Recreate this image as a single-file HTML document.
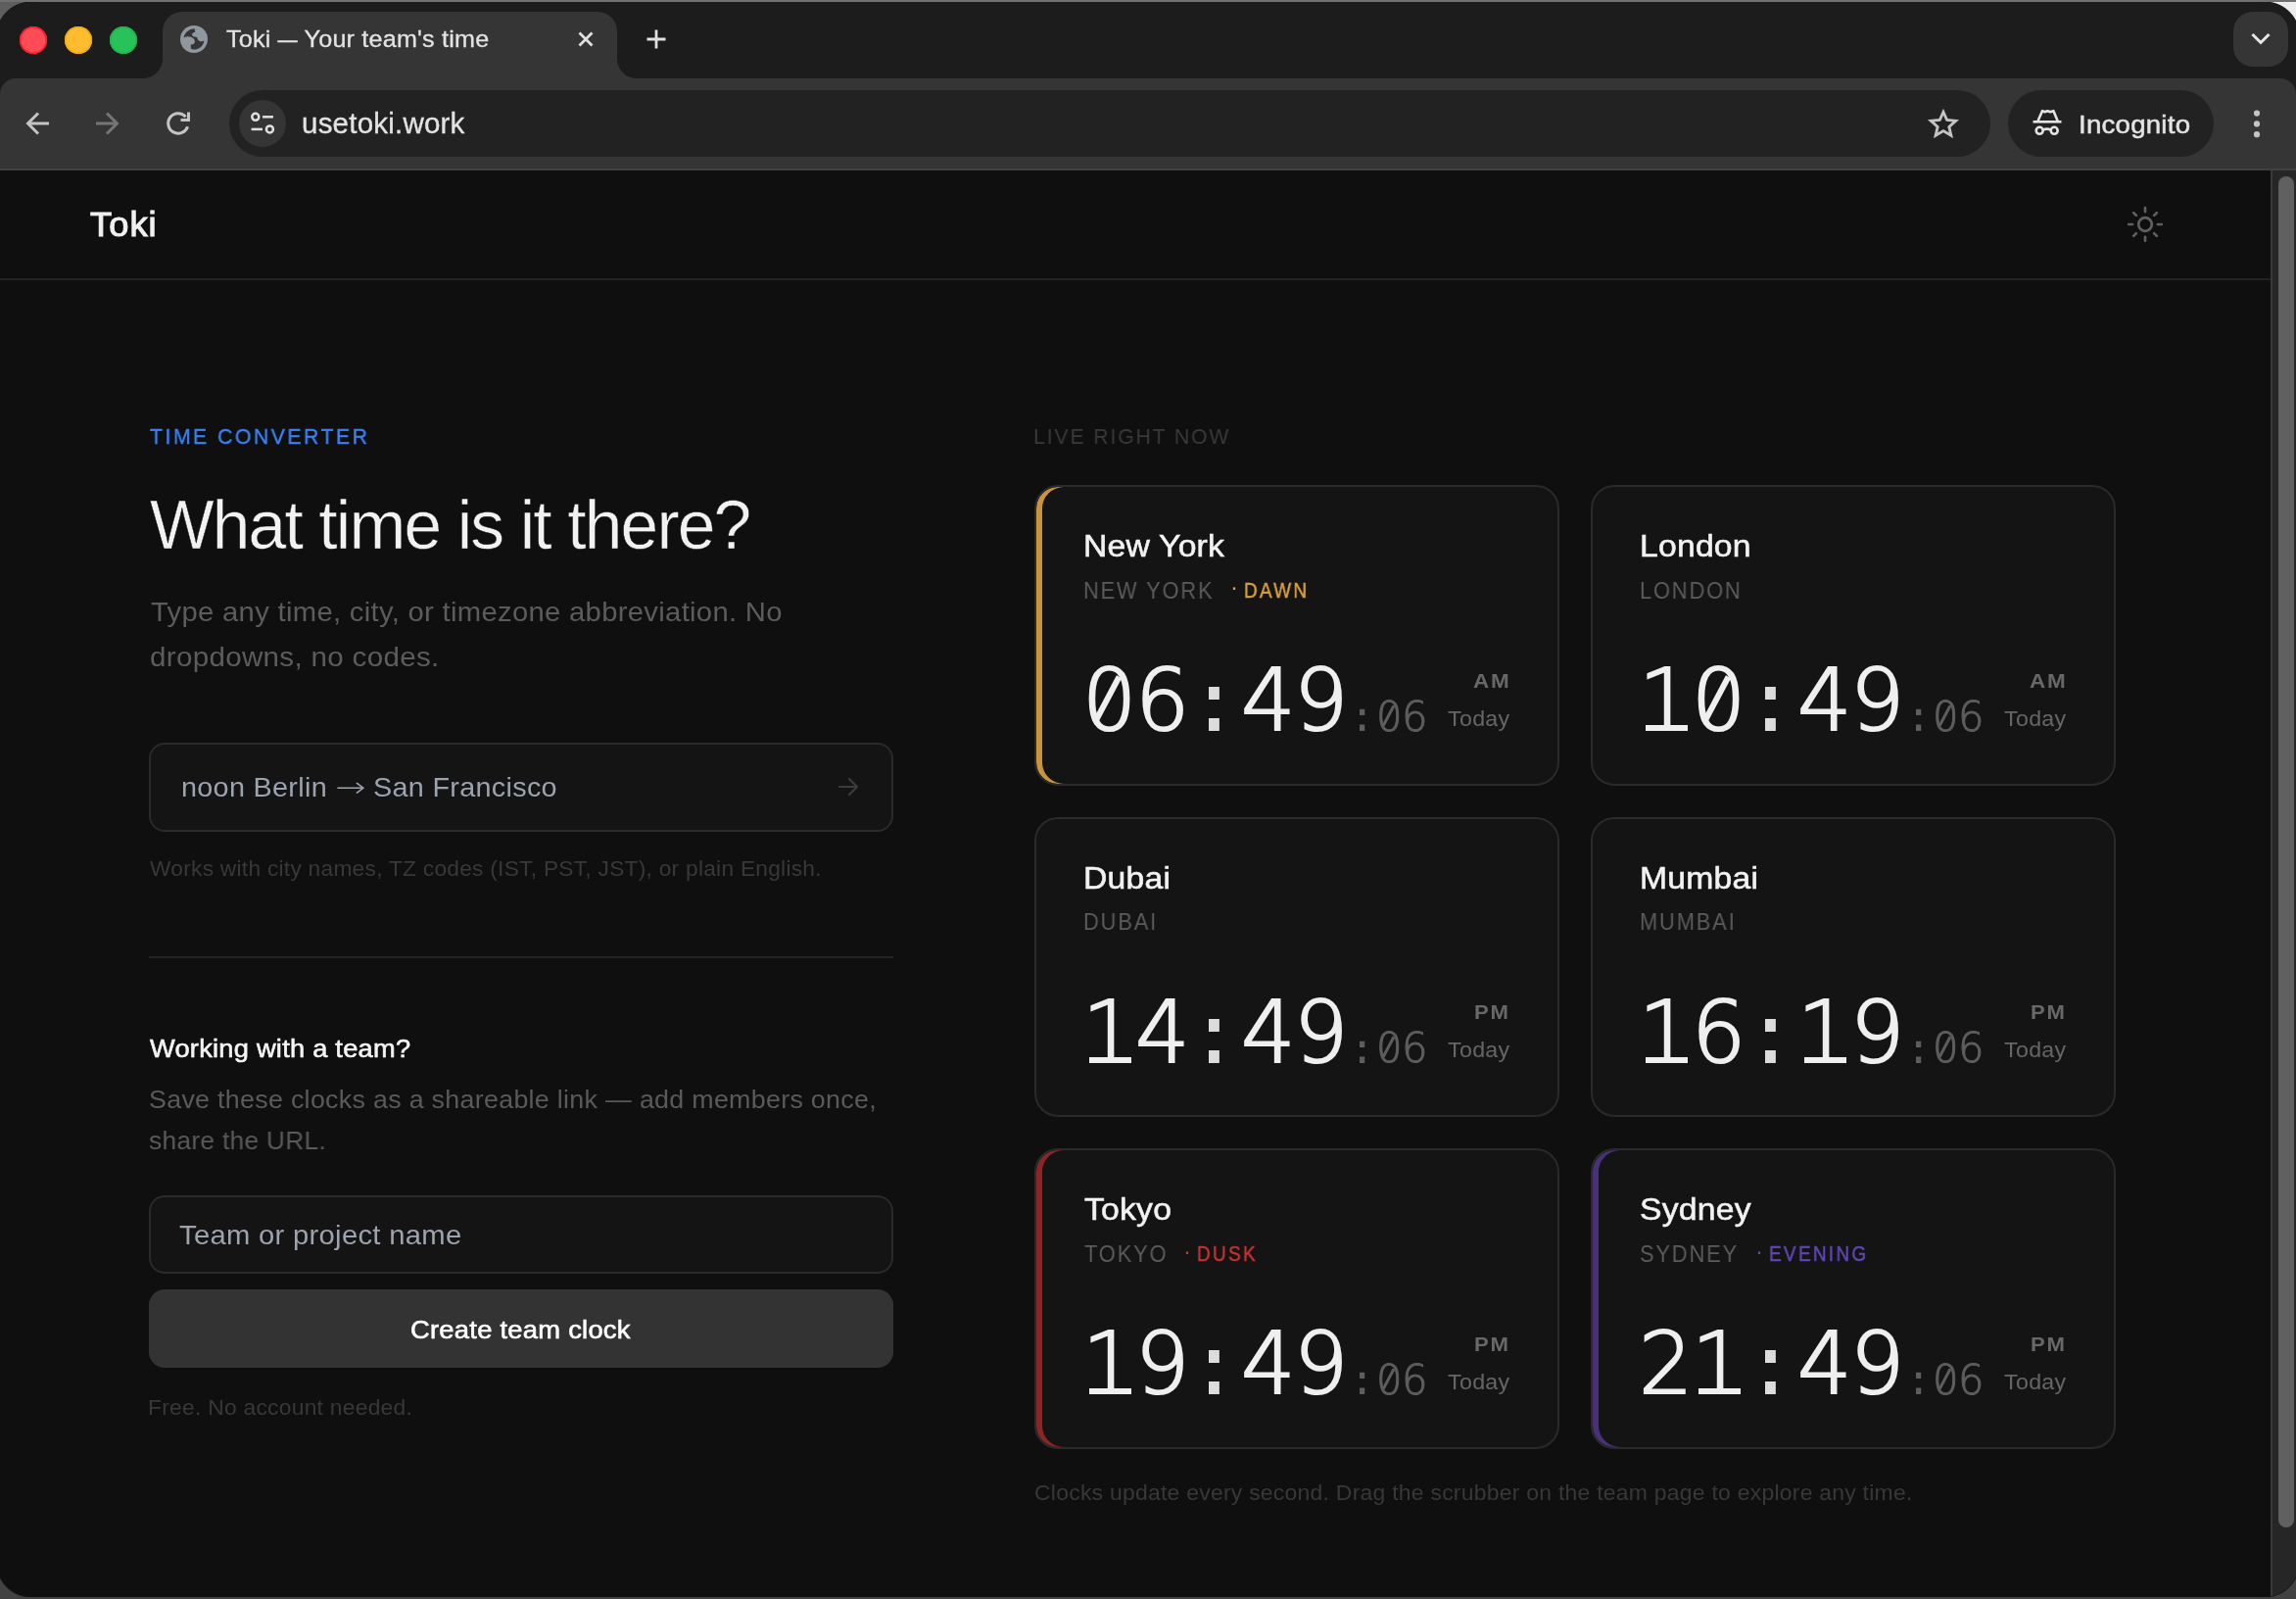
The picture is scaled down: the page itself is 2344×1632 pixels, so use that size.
<!DOCTYPE html>
<html lang="en">
<head>
<meta charset="utf-8">
<title>Toki — Your team's time</title>
<style>
*{box-sizing:border-box;margin:0;padding:0}
html,body{width:2344px;height:1632px;overflow:hidden;background:#424242}
body{font-family:"Liberation Sans",sans-serif;position:relative;color:#eee}
.abs{position:absolute}
/* window */
#win{position:absolute;left:0;top:2px;width:2344px;height:1628px;overflow:hidden;background:#0f0f0f}
#topstrip{position:absolute;left:0;top:0;width:2344px;height:2px;background:#707070}
#frame{position:absolute;left:0;top:0;width:2344px;height:110px;background:#1c1c1c}
#toolbar{position:absolute;left:0;top:78px;width:2344px;height:92px;background:#353535;border-radius:16px 16px 0 0}
#tbline{position:absolute;left:0;top:170px;width:2344px;height:2px;background:#3f4140}
.light{position:absolute;top:25px;width:28px;height:28px;border-radius:50%}
#tab{position:absolute;left:166px;top:10px;width:464px;height:70px;background:#353535;border-radius:20px 20px 0 0}
#tab:before,#tab:after{content:"";position:absolute;bottom:2px;width:20px;height:20px;background:radial-gradient(circle at 0 0,transparent 19.5px,#353535 20.5px)}
#tab:before{left:-20px}
#tab:after{right:-20px;background:radial-gradient(circle at 100% 0,transparent 19.5px,#353535 20.5px)}
#omni{position:absolute;left:234px;top:90px;width:1798px;height:68px;border-radius:34px;background:#222}
#site{position:absolute;left:244px;top:100px;width:48px;height:48px;border-radius:50%;background:#353535}
#incog{position:absolute;left:2050px;top:90px;width:210px;height:68px;border-radius:34px;background:#222}
#chev{position:absolute;left:2280px;top:10px;width:56px;height:56px;border-radius:20px;background:#353535}

svg{position:absolute;overflow:visible}
.st{fill:none;stroke:#c4c4c4;stroke-width:3;stroke-linecap:butt;stroke-linejoin:miter}
/* scrollbar */
#sbar{position:absolute;left:2318px;top:172px;width:26px;height:1456px;background:#262626;border-left:2px solid #393939}
#thumb{position:absolute;left:2326px;top:178px;width:16px;height:1379px;border-radius:8px;background:#606060}
/* page */
#page{position:absolute;left:0;top:172px;width:2318px;height:1456px;background:#0f0f0f;overflow:hidden}

#hdr{position:absolute;left:0;top:0;width:2318px;height:112px;border-bottom:2px solid #222}
.corner{position:absolute;width:36px;height:36px;z-index:5}
.arr{font-family:"DejaVu Sans",sans-serif;display:inline-block;transform:scaleX(1.3);margin:0 3px;font-weight:200}
.t{position:absolute;white-space:nowrap;will-change:transform}
.box{position:absolute;background:#141414;border:2px solid #2a2a2a;border-radius:16px}
.card{position:absolute;width:536px;background:#141414;border:2px solid #2a2a2a;border-radius:24px}
.z,.o{position:relative;display:inline-block}
.o:after{content:"";position:absolute;left:50%;top:75px;width:43px;height:6.2px;margin-left:-19.8px;background:#efefef}
.z:after{content:"";position:absolute;left:50%;top:47.3px;width:6.4px;height:49px;margin:-24.5px 0 0 -3.9px;background:#efefef;transform:rotate(28deg)}
.sm .z:after{top:23.6px;width:3.2px;height:23.4px;margin:-11.7px 0 0 -1.9px;background:#5e5e5e}
</style>
</head>
<body>
<div id="topstrip"></div>
<div id="win">

  <div id="frame"></div>
  <div id="toolbar"></div>
  <div id="tbline"></div>
  <div class="light" style="left:20px;background:#ff4b55;box-shadow:inset 0 0 0 1.5px #ff1a2e"></div>
  <div class="light" style="left:66px;background:#febc2e;box-shadow:inset 0 0 0 1.5px #f5ab10"></div>
  <div class="light" style="left:112px;background:#28c25a;box-shadow:inset 0 0 0 1.5px #1fb44e"></div>
  <div id="tab"></div>
  <div id="omni"></div>
  <div id="site"></div>
  <div id="incog"></div>
<div class="t" id="tabtitle" style="left:231.20px;top:21.69px;font-size:23.7px;line-height:32px;color:#e3e3e3;letter-spacing:0.200px;-webkit-text-stroke:.3px #e3e3e3;transform:scaleX(1.0610);transform-origin:0 0;">Toki <span style='display:inline-block;transform:scaleX(.8);margin:0 -2.5px'>—</span> Your team's time</div>
<div class="t" id="url" style="left:308.00px;top:106.49px;font-size:28.6px;line-height:36px;color:#e3e3e3;letter-spacing:0.200px;-webkit-text-stroke:.3px #e3e3e3;transform:scaleX(1.0326);transform-origin:0 0;">usetoki.work</div>
<div class="t" id="incogt" style="left:2121.50px;top:107.08px;font-size:26.6px;line-height:36px;color:#e3e3e3;letter-spacing:0.200px;-webkit-text-stroke:.5px #e3e3e3;transform:scaleX(1.0410);transform-origin:0 0;">Incognito</div>

  <div id="chev"></div>

  <svg id="globe" style="left:184px;top:24px" width="28" height="28" viewBox="0 0 28 28"><circle cx="14" cy="14" r="14" fill="#8f979f"/><path d="M14.5 3.2 C9 3.4 4.6 7.2 3.6 12.4 C7 10.6 11 11.2 13.6 13.6 C15.6 15.6 15.2 18.4 13 19.2 L10.8 19.4 L10.8 23.6 C12 24.4 13.6 24.8 15 24.6 C20 24.2 23.8 20.4 24.4 15.6 C22.4 16.8 19.6 16.6 18.2 14.8 C17.4 13.8 17.6 12.6 17 12 L13.2 11.2 C11.6 10 11.8 8 13.4 7.2 L15.4 6.8 Z" fill="#353535"/></svg>
  <svg id="tabx" style="left:587px;top:27px" width="22" height="22" viewBox="0 0 22 22"><path class="st" style="stroke:#e0e0e0;stroke-width:2.8" d="M4.5 4.5 L17.5 17.5 M17.5 4.5 L4.5 17.5"/></svg>
  <svg id="plus" style="left:658px;top:26px" width="24" height="24" viewBox="0 0 24 24"><path class="st" style="stroke:#e0e0e0;stroke-width:2.8" d="M12 2.5 V21.5 M2.5 12 H21.5"/></svg>
  <svg id="back" style="left:26px;top:112px" width="24" height="24" viewBox="0 0 24 24"><path class="st" d="M24 12 H3 M13 1.5 L2.5 12 L13 22.5"/></svg>
  <svg id="fwd" style="left:98px;top:112px" width="24" height="24" viewBox="0 0 24 24"><path class="st" style="stroke:#767676" d="M0 12 H21 M11 1.5 L21.5 12 L11 22.5"/></svg>
  <svg id="reload" style="left:170px;top:112px" width="24" height="24" viewBox="0 0 24 24"><path class="st" d="M21.6 15.2 A10.2 10.2 0 1 1 19.6 5.2"/><path class="st" d="M22.5 0.5 V8.5 H14.5"/></svg>
  <svg id="tune" style="left:255px;top:112px" width="26" height="24" viewBox="0 0 26 24"><g fill="none" stroke="#e0e0e0" stroke-width="2.5"><circle cx="5.8" cy="5.3" r="3.5"/><path d="M13 5.3H24"/><circle cx="20.4" cy="17.9" r="3.5"/><path d="M1.6 17.9H13"/></g></svg>
  <svg id="star" style="left:1968px;top:108px" width="32" height="32" viewBox="0 0 34 32"><path class="st" style="stroke-width:3" d="M17 3.5 L20.9 12.3 L30.5 13.2 L23.2 19.6 L25.4 29 L17 24 L8.6 29 L10.8 19.6 L3.5 13.2 L13.1 12.3 Z"/></svg>
  <svg id="incogi" style="left:2075px;top:108px" width="30" height="30" viewBox="0 0 30 30"><g fill="none" stroke="#e4e4e4" stroke-width="2.6"><path d="M0.5 14.3H29.5"/><path stroke-linejoin="round" d="M5.6 13.2L10 3.2L12.6 4.3L15.3 3.2L18.2 4.3L21.4 3.2L25.6 13.2"/><circle cx="7.2" cy="23.3" r="3.5"/><circle cx="22.2" cy="23.3" r="3.5"/><path d="M10.6 22.4Q14.7 20.8 18.8 22.4"/></g></svg>
  <svg id="dots" style="left:2300px;top:110px" width="8" height="30" viewBox="0 0 8 30"><circle cx="4" cy="3.6" r="3.1" fill="#c4c4c4"/><circle cx="4" cy="14.4" r="3.1" fill="#c4c4c4"/><circle cx="4" cy="25.2" r="3.1" fill="#c4c4c4"/></svg>
  <svg id="chevi" style="left:2296px;top:30px" width="24" height="16" viewBox="0 0 24 16"><path class="st" style="stroke:#e8e8e8;stroke-width:3" d="M3.5 3 L12 11.5 L20.5 3"/></svg>
  
<div id="page">
<div id="hdr"></div>
<div class="t" id="logo" style="left:91.50px;top:31.40px;font-size:35.2px;line-height:48px;color:#f0f0f0;letter-spacing:1.036px;-webkit-text-stroke:1.1px #f0f0f0;transform:scaleX(1.0300);transform-origin:0 0;">Toki</div>
<svg id="sun" style="left:2169.9px;top:34.9px" width="40" height="40" viewBox="0 0 40 40"><g fill="none" stroke="#606060" stroke-width="2.7" stroke-linecap="round"><circle cx="20" cy="20" r="6.8"/><path d="M32.90 20.00L36.80 20.00M29.12 29.12L31.88 31.88M20.00 32.90L20.00 36.80M10.88 29.12L8.12 31.88M7.10 20.00L3.20 20.00M10.88 10.88L8.12 8.12M20.00 7.10L20.00 3.20M29.12 10.88L31.88 8.12"/></g></svg>
<div class="t" id="label1" style="left:152.80px;top:258.17px;font-size:22.3px;line-height:28px;color:#3b82f6;letter-spacing:2.656px;-webkit-text-stroke:.4px #3b82f6;transform:scaleX(0.9500);transform-origin:0 0;">TIME CONVERTER</div>
<div class="t" id="h1" style="left:153.10px;top:319.92px;font-size:69.5px;line-height:84px;color:#f2f2f2;letter-spacing:-1.838px;-webkit-text-stroke:.5px #0f0f0f;">What time is it there?</div>
<div class="t" id="sub1" style="left:154.20px;top:426.82px;font-size:28.5px;line-height:46px;color:#5c5c5c;letter-spacing:0.300px;transform:scaleX(1.0255);transform-origin:0 0;">Type any time, city, or timezone abbreviation. No</div>
<div class="t" id="sub2" style="left:152.70px;top:472.52px;font-size:28.5px;line-height:46px;color:#5c5c5c;letter-spacing:0.300px;transform:scaleX(1.0376);transform-origin:0 0;">dropdowns, no codes.</div>
<div class="box" style="left:152px;top:583.5px;width:760px;height:91.5px"></div>
<div class="t" id="ph1" style="left:184.90px;top:611.22px;font-size:28.5px;line-height:36px;color:#9ca3af;letter-spacing:0.300px;transform:scaleX(1.0099);transform-origin:0 0;">noon Berlin <span class="arr">→</span> San Francisco</div>
<svg style="left:854.6px;top:618.4px" width="22" height="22" viewBox="0 0 22 22"><path fill="none" stroke="#3c3c3c" stroke-width="2.2" stroke-linecap="round" stroke-linejoin="round" d="M2 11H20M12 3L20 11L12 19"/></svg>
<div class="t" id="hint" style="left:153.00px;top:697.57px;font-size:22.3px;line-height:30px;color:#383838;letter-spacing:0.250px;transform:scaleX(1.0200);transform-origin:0 0;">Works with city names, TZ codes (IST, PST, JST), or plain English.</div>
<div class="abs" style="left:152px;top:802px;width:760px;height:2px;background:#242424"></div>
<div class="t" id="team" style="left:153.00px;top:879.05px;font-size:26.4px;line-height:34px;color:#f4f4f4;letter-spacing:0.250px;-webkit-text-stroke:.6px #f4f4f4;transform:scaleX(1.0310);transform-origin:0 0;">Working with a team?</div>
<div class="t" id="desc1" style="left:152.00px;top:927.15px;font-size:26.4px;line-height:42px;color:#5a5a5a;letter-spacing:0.300px;transform:scaleX(1.0157);transform-origin:0 0;">Save these clocks as a shareable link — add members once,</div>
<div class="t" id="desc2" style="left:152.00px;top:969.25px;font-size:26.4px;line-height:42px;color:#5a5a5a;letter-spacing:0.300px;transform:scaleX(0.9967);transform-origin:0 0;">share the URL.</div>
<div class="box" style="left:152px;top:1046px;width:760px;height:80px"></div>
<div class="t" id="ph2" style="left:182.90px;top:1068.22px;font-size:28.5px;line-height:36px;color:#9ca3af;letter-spacing:0.300px;transform:scaleX(1.0242);transform-origin:0 0;">Team or project name</div>
<div class="abs" style="left:152px;top:1142px;width:760px;height:80px;background:#333;border-radius:16px"></div>
<div class="t" id="btn" style="left:418.90px;top:1165.15px;font-size:26.4px;line-height:36px;color:#fff;letter-spacing:0.250px;-webkit-text-stroke:.6px #fff;transform:scaleX(1.0360);transform-origin:0 0;">Create team clock</div>
<div class="t" id="free" style="left:151.40px;top:1247.67px;font-size:22.3px;line-height:30px;color:#383838;letter-spacing:0.250px;transform:scaleX(1.0238);transform-origin:0 0;">Free. No account needed.</div>
<div class="t" id="label2" style="left:1054.80px;top:258.27px;font-size:22.3px;line-height:28px;color:#3a3a3a;letter-spacing:1.976px;transform:scaleX(0.9500);transform-origin:0 0;">LIVE RIGHT NOW</div>
<div class="card" id="card1" style="left:1056px;top:321px;height:306.67px;box-shadow:inset 6px 0 0 0 #c8943c;">
<div class="t" id="city1" style="left:47.60px;top:41.12px;font-size:31.4px;line-height:40px;color:#f2f2f2;letter-spacing:0.200px;-webkit-text-stroke:.55px #f2f2f2;transform:scaleX(1.0739);transform-origin:0 0;">New York</div>
<div class="t" id="tz1" style="left:47.60px;top:91.63px;font-size:23px;line-height:28px;color:#5c5c5c;letter-spacing:1.955px;transform:scaleX(0.9500);transform-origin:0 0;">NEW YORK</div>
<div class="t" id="dot1" style="left:197.50px;top:88.48px;font-size:24px;line-height:28px;color:#d9a03f;letter-spacing:0.000px;">·</div>
<div class="t" id="lab1" style="left:211.50px;top:91.67px;font-size:22.3px;line-height:28px;color:#d9a03f;letter-spacing:2.719px;-webkit-text-stroke:.5px #d9a03f;transform:scaleX(0.8500);transform-origin:0 0;">DAWN</div>
<div class="t" id="hh1" style="left:47.20px;top:167.90px;font-family:'DejaVu Sans',sans-serif;font-size:87px;line-height:100px;color:#efefef;letter-spacing:-1.330px;font-weight:200;-webkit-text-stroke:2.2px #efefef;"><span class="z">0</span>6</div>
<div class="t" id="col1" style="left:155.00px;top:169.15px;font-family:'DejaVu Sans Mono',monospace;font-size:88px;line-height:100px;color:#dcdcdc;letter-spacing:0.000px;">:</div>
<div class="t" id="mm1" style="left:209.20px;top:167.90px;font-family:'DejaVu Sans',sans-serif;font-size:87px;line-height:100px;color:#efefef;letter-spacing:-1.330px;font-weight:200;-webkit-text-stroke:2.2px #efefef;">49</div>
<div class="t" id="scol1" style="left:320.35px;top:210.07px;font-family:'DejaVu Sans Mono',monospace;font-size:42px;line-height:50px;color:#5e5e5e;letter-spacing:0.000px;">:</div>
<div class="t sm" id="ss1" style="left:347.00px;top:209.64px;font-family:'DejaVu Sans',sans-serif;font-size:41.8px;line-height:50px;color:#5e5e5e;letter-spacing:-0.580px;font-weight:200;-webkit-text-stroke:1px #5e5e5e;"><span class="z">0</span>6</div>
<div class="t" id="ap1" style="left:446.00px;top:184.80px;font-size:20.5px;line-height:26px;color:#686868;letter-spacing:1.600px;font-weight:bold;transform:scaleX(1.0955);transform-origin:0 0;">AM</div>
<div class="t" id="day1" style="left:419.60px;top:222.55px;font-size:21.5px;line-height:28px;color:#666;letter-spacing:0.300px;transform:scaleX(1.0788);transform-origin:0 0;">Today</div>
</div>
<div class="card" id="card2" style="left:1624px;top:321px;height:306.67px;">
<div class="t" id="city2" style="left:47.60px;top:41.12px;font-size:31.4px;line-height:40px;color:#f2f2f2;letter-spacing:0.200px;-webkit-text-stroke:.55px #f2f2f2;transform:scaleX(1.0739);transform-origin:0 0;">London</div>
<div class="t" id="tz2" style="left:47.60px;top:91.63px;font-size:23px;line-height:28px;color:#5c5c5c;letter-spacing:1.955px;transform:scaleX(0.9500);transform-origin:0 0;">LONDON</div>
<div class="t" id="hh2" style="left:47.20px;top:167.90px;font-family:'DejaVu Sans',sans-serif;font-size:87px;line-height:100px;color:#efefef;letter-spacing:-1.330px;font-weight:200;-webkit-text-stroke:2.2px #efefef;"><span class="o">1</span><span class="z">0</span></div>
<div class="t" id="col2" style="left:155.00px;top:169.15px;font-family:'DejaVu Sans Mono',monospace;font-size:88px;line-height:100px;color:#dcdcdc;letter-spacing:0.000px;">:</div>
<div class="t" id="mm2" style="left:209.20px;top:167.90px;font-family:'DejaVu Sans',sans-serif;font-size:87px;line-height:100px;color:#efefef;letter-spacing:-1.330px;font-weight:200;-webkit-text-stroke:2.2px #efefef;">49</div>
<div class="t" id="scol2" style="left:320.35px;top:210.07px;font-family:'DejaVu Sans Mono',monospace;font-size:42px;line-height:50px;color:#5e5e5e;letter-spacing:0.000px;">:</div>
<div class="t sm" id="ss2" style="left:347.00px;top:209.64px;font-family:'DejaVu Sans',sans-serif;font-size:41.8px;line-height:50px;color:#5e5e5e;letter-spacing:-0.580px;font-weight:200;-webkit-text-stroke:1px #5e5e5e;"><span class="z">0</span>6</div>
<div class="t" id="ap2" style="left:446.00px;top:184.80px;font-size:20.5px;line-height:26px;color:#686868;letter-spacing:1.600px;font-weight:bold;transform:scaleX(1.0955);transform-origin:0 0;">AM</div>
<div class="t" id="day2" style="left:419.60px;top:222.55px;font-size:21.5px;line-height:28px;color:#666;letter-spacing:0.300px;transform:scaleX(1.0788);transform-origin:0 0;">Today</div>
</div>
<div class="card" id="card3" style="left:1056px;top:659.67px;height:306.67px;">
<div class="t" id="city3" style="left:47.60px;top:41.12px;font-size:31.4px;line-height:40px;color:#f2f2f2;letter-spacing:0.200px;-webkit-text-stroke:.55px #f2f2f2;transform:scaleX(1.0739);transform-origin:0 0;">Dubai</div>
<div class="t" id="tz3" style="left:47.60px;top:91.63px;font-size:23px;line-height:28px;color:#5c5c5c;letter-spacing:1.955px;transform:scaleX(0.9500);transform-origin:0 0;">DUBAI</div>
<div class="t" id="hh3" style="left:47.20px;top:167.90px;font-family:'DejaVu Sans',sans-serif;font-size:87px;line-height:100px;color:#efefef;letter-spacing:-1.330px;font-weight:200;-webkit-text-stroke:2.2px #efefef;"><span class="o">1</span>4</div>
<div class="t" id="col3" style="left:155.00px;top:169.15px;font-family:'DejaVu Sans Mono',monospace;font-size:88px;line-height:100px;color:#dcdcdc;letter-spacing:0.000px;">:</div>
<div class="t" id="mm3" style="left:209.20px;top:167.90px;font-family:'DejaVu Sans',sans-serif;font-size:87px;line-height:100px;color:#efefef;letter-spacing:-1.330px;font-weight:200;-webkit-text-stroke:2.2px #efefef;">49</div>
<div class="t" id="scol3" style="left:320.35px;top:210.07px;font-family:'DejaVu Sans Mono',monospace;font-size:42px;line-height:50px;color:#5e5e5e;letter-spacing:0.000px;">:</div>
<div class="t sm" id="ss3" style="left:347.00px;top:209.64px;font-family:'DejaVu Sans',sans-serif;font-size:41.8px;line-height:50px;color:#5e5e5e;letter-spacing:-0.580px;font-weight:200;-webkit-text-stroke:1px #5e5e5e;"><span class="z">0</span>6</div>
<div class="t" id="ap3" style="left:447.00px;top:184.80px;font-size:20.5px;line-height:26px;color:#686868;letter-spacing:1.600px;font-weight:bold;transform:scaleX(1.0783);transform-origin:0 0;">PM</div>
<div class="t" id="day3" style="left:419.60px;top:222.55px;font-size:21.5px;line-height:28px;color:#666;letter-spacing:0.300px;transform:scaleX(1.0788);transform-origin:0 0;">Today</div>
</div>
<div class="card" id="card4" style="left:1624px;top:659.67px;height:306.67px;">
<div class="t" id="city4" style="left:47.60px;top:41.12px;font-size:31.4px;line-height:40px;color:#f2f2f2;letter-spacing:0.200px;-webkit-text-stroke:.55px #f2f2f2;transform:scaleX(1.0739);transform-origin:0 0;">Mumbai</div>
<div class="t" id="tz4" style="left:47.60px;top:91.63px;font-size:23px;line-height:28px;color:#5c5c5c;letter-spacing:1.955px;transform:scaleX(0.9500);transform-origin:0 0;">MUMBAI</div>
<div class="t" id="hh4" style="left:47.20px;top:167.90px;font-family:'DejaVu Sans',sans-serif;font-size:87px;line-height:100px;color:#efefef;letter-spacing:-1.330px;font-weight:200;-webkit-text-stroke:2.2px #efefef;"><span class="o">1</span>6</div>
<div class="t" id="col4" style="left:155.00px;top:169.15px;font-family:'DejaVu Sans Mono',monospace;font-size:88px;line-height:100px;color:#dcdcdc;letter-spacing:0.000px;">:</div>
<div class="t" id="mm4" style="left:209.20px;top:167.90px;font-family:'DejaVu Sans',sans-serif;font-size:87px;line-height:100px;color:#efefef;letter-spacing:-1.330px;font-weight:200;-webkit-text-stroke:2.2px #efefef;"><span class="o">1</span>9</div>
<div class="t" id="scol4" style="left:320.35px;top:210.07px;font-family:'DejaVu Sans Mono',monospace;font-size:42px;line-height:50px;color:#5e5e5e;letter-spacing:0.000px;">:</div>
<div class="t sm" id="ss4" style="left:347.00px;top:209.64px;font-family:'DejaVu Sans',sans-serif;font-size:41.8px;line-height:50px;color:#5e5e5e;letter-spacing:-0.580px;font-weight:200;-webkit-text-stroke:1px #5e5e5e;"><span class="z">0</span>6</div>
<div class="t" id="ap4" style="left:447.00px;top:184.80px;font-size:20.5px;line-height:26px;color:#686868;letter-spacing:1.600px;font-weight:bold;transform:scaleX(1.0783);transform-origin:0 0;">PM</div>
<div class="t" id="day4" style="left:419.60px;top:222.55px;font-size:21.5px;line-height:28px;color:#666;letter-spacing:0.300px;transform:scaleX(1.0788);transform-origin:0 0;">Today</div>
</div>
<div class="card" id="card5" style="left:1056px;top:998.3299999999999px;height:306.67px;box-shadow:inset 6px 0 0 0 #8c2626;">
<div class="t" id="city5" style="left:49.30px;top:41.12px;font-size:31.4px;line-height:40px;color:#f2f2f2;letter-spacing:0.200px;-webkit-text-stroke:.55px #f2f2f2;transform:scaleX(1.0739);transform-origin:0 0;">Tokyo</div>
<div class="t" id="tz5" style="left:49.30px;top:91.63px;font-size:23px;line-height:28px;color:#5c5c5c;letter-spacing:1.955px;transform:scaleX(0.9500);transform-origin:0 0;">TOKYO</div>
<div class="t" id="dot5" style="left:149.90px;top:88.48px;font-size:24px;line-height:28px;color:#c83232;letter-spacing:0.000px;">·</div>
<div class="t" id="lab5" style="left:163.90px;top:91.67px;font-size:22.3px;line-height:28px;color:#c83232;letter-spacing:2.719px;-webkit-text-stroke:.5px #c83232;transform:scaleX(0.8500);transform-origin:0 0;">DUSK</div>
<div class="t" id="hh5" style="left:47.20px;top:167.90px;font-family:'DejaVu Sans',sans-serif;font-size:87px;line-height:100px;color:#efefef;letter-spacing:-1.330px;font-weight:200;-webkit-text-stroke:2.2px #efefef;"><span class="o">1</span>9</div>
<div class="t" id="col5" style="left:155.00px;top:169.15px;font-family:'DejaVu Sans Mono',monospace;font-size:88px;line-height:100px;color:#dcdcdc;letter-spacing:0.000px;">:</div>
<div class="t" id="mm5" style="left:209.20px;top:167.90px;font-family:'DejaVu Sans',sans-serif;font-size:87px;line-height:100px;color:#efefef;letter-spacing:-1.330px;font-weight:200;-webkit-text-stroke:2.2px #efefef;">49</div>
<div class="t" id="scol5" style="left:320.35px;top:210.07px;font-family:'DejaVu Sans Mono',monospace;font-size:42px;line-height:50px;color:#5e5e5e;letter-spacing:0.000px;">:</div>
<div class="t sm" id="ss5" style="left:347.00px;top:209.64px;font-family:'DejaVu Sans',sans-serif;font-size:41.8px;line-height:50px;color:#5e5e5e;letter-spacing:-0.580px;font-weight:200;-webkit-text-stroke:1px #5e5e5e;"><span class="z">0</span>6</div>
<div class="t" id="ap5" style="left:447.00px;top:184.80px;font-size:20.5px;line-height:26px;color:#686868;letter-spacing:1.600px;font-weight:bold;transform:scaleX(1.0783);transform-origin:0 0;">PM</div>
<div class="t" id="day5" style="left:419.60px;top:222.55px;font-size:21.5px;line-height:28px;color:#666;letter-spacing:0.300px;transform:scaleX(1.0788);transform-origin:0 0;">Today</div>
</div>
<div class="card" id="card6" style="left:1624px;top:998.3299999999999px;height:306.67px;box-shadow:inset 6px 0 0 0 #48317a;">
<div class="t" id="city6" style="left:47.60px;top:41.12px;font-size:31.4px;line-height:40px;color:#f2f2f2;letter-spacing:0.200px;-webkit-text-stroke:.55px #f2f2f2;transform:scaleX(1.0739);transform-origin:0 0;">Sydney</div>
<div class="t" id="tz6" style="left:47.60px;top:91.63px;font-size:23px;line-height:28px;color:#5c5c5c;letter-spacing:1.955px;transform:scaleX(0.9500);transform-origin:0 0;">SYDNEY</div>
<div class="t" id="dot6" style="left:165.60px;top:88.48px;font-size:24px;line-height:28px;color:#6246b2;letter-spacing:0.000px;">·</div>
<div class="t" id="lab6" style="left:179.60px;top:91.67px;font-size:22.3px;line-height:28px;color:#6246b2;letter-spacing:2.719px;-webkit-text-stroke:.5px #6246b2;transform:scaleX(0.8500);transform-origin:0 0;">EVENING</div>
<div class="t" id="hh6" style="left:47.20px;top:167.90px;font-family:'DejaVu Sans',sans-serif;font-size:87px;line-height:100px;color:#efefef;letter-spacing:-1.330px;font-weight:200;-webkit-text-stroke:2.2px #efefef;">2<span class="o">1</span></div>
<div class="t" id="col6" style="left:155.00px;top:169.15px;font-family:'DejaVu Sans Mono',monospace;font-size:88px;line-height:100px;color:#dcdcdc;letter-spacing:0.000px;">:</div>
<div class="t" id="mm6" style="left:209.20px;top:167.90px;font-family:'DejaVu Sans',sans-serif;font-size:87px;line-height:100px;color:#efefef;letter-spacing:-1.330px;font-weight:200;-webkit-text-stroke:2.2px #efefef;">49</div>
<div class="t" id="scol6" style="left:320.35px;top:210.07px;font-family:'DejaVu Sans Mono',monospace;font-size:42px;line-height:50px;color:#5e5e5e;letter-spacing:0.000px;">:</div>
<div class="t sm" id="ss6" style="left:347.00px;top:209.64px;font-family:'DejaVu Sans',sans-serif;font-size:41.8px;line-height:50px;color:#5e5e5e;letter-spacing:-0.580px;font-weight:200;-webkit-text-stroke:1px #5e5e5e;"><span class="z">0</span>6</div>
<div class="t" id="ap6" style="left:447.00px;top:184.80px;font-size:20.5px;line-height:26px;color:#686868;letter-spacing:1.600px;font-weight:bold;transform:scaleX(1.0783);transform-origin:0 0;">PM</div>
<div class="t" id="day6" style="left:419.60px;top:222.55px;font-size:21.5px;line-height:28px;color:#666;letter-spacing:0.300px;transform:scaleX(1.0788);transform-origin:0 0;">Today</div>
</div>
<div class="t" id="foot" style="left:1056.00px;top:1335.27px;font-size:22.3px;line-height:30px;color:#383838;letter-spacing:0.250px;transform:scaleX(1.0279);transform-origin:0 0;">Clocks update every second. Drag the scrubber on the team page to explore any time.</div>
</div>
<div id="sbar"></div>
<div id="thumb"></div>
</div>
<div class="corner" style="left:0;top:2px;background:radial-gradient(circle at 32px 35.5px,transparent 34.8px,#161616 35.5px,#5e5e5e 36.5px)"></div>
<div class="corner" style="left:2308px;top:2px;background:radial-gradient(circle at 4px 35.5px,transparent 34.8px,#161616 35.5px,#ececec 36.5px)"></div>
<div class="corner" style="left:0;top:1594px;background:radial-gradient(circle at 32px .5px,transparent 34.8px,#161616 35.5px,#424242 36.5px)"></div>
<div class="corner" style="left:2308px;top:1594px;background:radial-gradient(circle at 4px .5px,transparent 34.8px,#161616 35.5px,#424242 36.5px)"></div>
</body>
</html>
